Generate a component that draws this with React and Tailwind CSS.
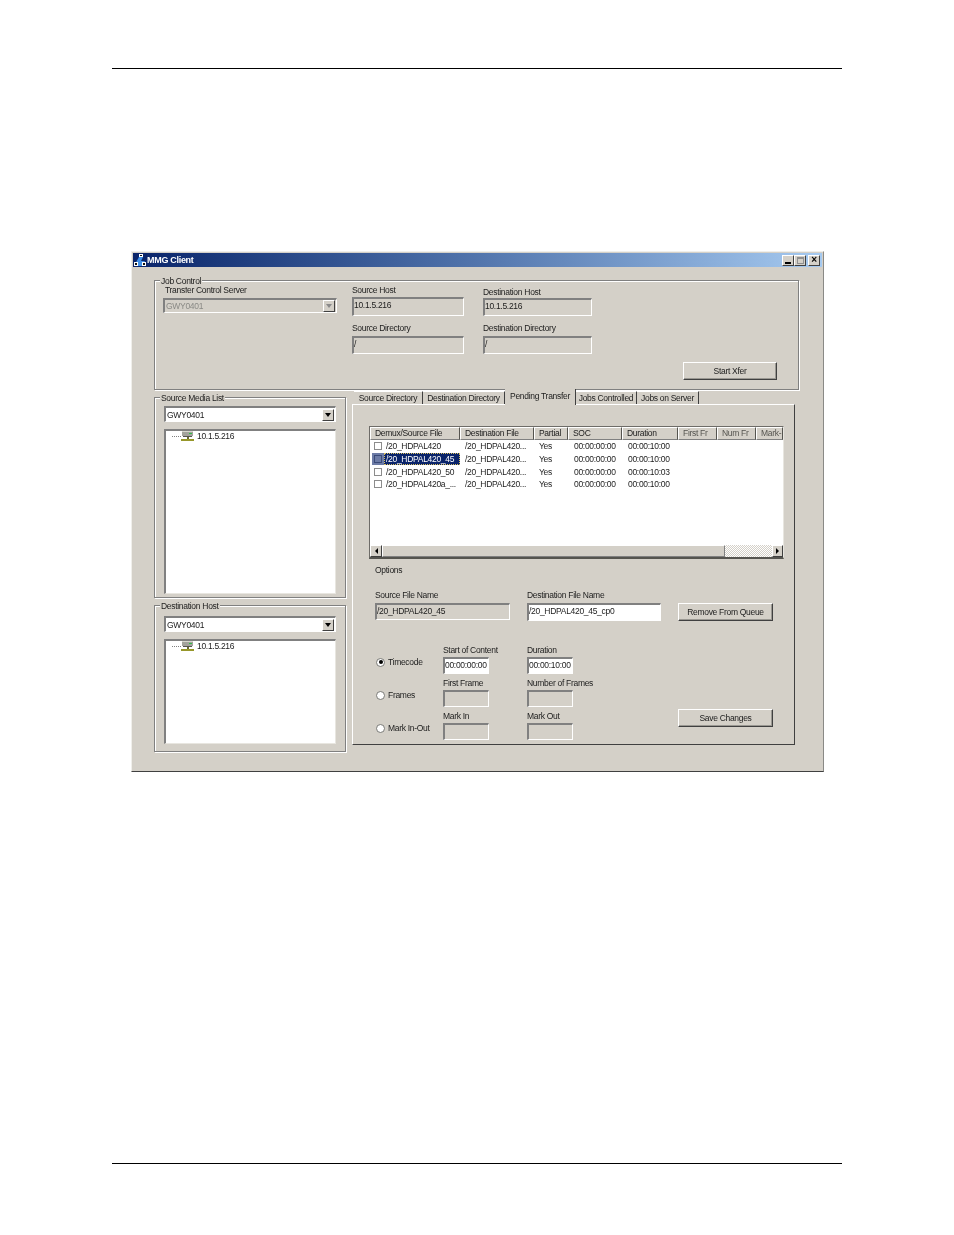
import React from "react";

const rows = [
	{ src: "/20_HDPAL420", dst: "/20_HDPAL420...", partial: "Yes", soc: "00:00:00:00", dur: "00:00:10:00" },
	{ src: "/20_HDPAL420_45", dst: "/20_HDPAL420...", partial: "Yes", soc: "00:00:00:00", dur: "00:00:10:00", selected: true },
	{ src: "/20_HDPAL420_50", dst: "/20_HDPAL420...", partial: "Yes", soc: "00:00:00:00", dur: "00:00:10:03" },
	{ src: "/20_HDPAL420a_...", dst: "/20_HDPAL420...", partial: "Yes", soc: "00:00:00:00", dur: "00:00:10:00" },
];

const columns = [
	{ label: "Demux/Source File", width: "w-[90px]" },
	{ label: "Destination File", width: "w-[74px]" },
	{ label: "Partial", width: "w-[34px]" },
	{ label: "SOC", width: "w-[54px]" },
	{ label: "Duration", width: "w-[56px]" },
	{ label: "First Fr", width: "w-[39px]" },
	{ label: "Num Fr", width: "w-[39px]" },
	{ label: "Mark-I", width: "w-[27px]" },
];

const Label = ({ children, className = "" }) => (
	<div className={`h-[12px] leading-[12px] whitespace-nowrap ${className}`}>{children}</div>
);

// sunken win2k edit box
const Field = ({ value, white, className = "" }) => (
	<div
		className={`border-t-2 border-l-2 border-t-[#808080] border-l-[#808080] border-b border-r border-b-white border-r-white overflow-hidden leading-[13px] whitespace-nowrap ${
			white ? "bg-white" : "bg-[#d4d0c8]"
		} ${className}`}
	>
		{value}
	</div>
);

const Button = ({ children, className = "" }) => (
	<div
		className={`w-[95px] h-[18px] flex items-center justify-center bg-[#d4d0c8] border-t border-l border-t-white border-l-white border-b border-r border-b-[#404040] border-r-[#404040] shadow-[inset_-1px_-1px_0_#9a9892] ${className}`}
	>
		{children}
	</div>
);

const Arrow = ({ dir = "down", muted }) => {
	if (dir === "left") {
		return <div className="w-0 h-0 border-t-[3px] border-b-[3px] border-r-[3px] border-t-transparent border-b-transparent border-r-black" />;
	}
	if (dir === "right") {
		return <div className="w-0 h-0 border-t-[3px] border-b-[3px] border-l-[3px] border-t-transparent border-b-transparent border-l-black" />;
	}
	return (
		<div
			className={`w-0 h-0 border-l-[3px] border-r-[3px] border-t-[4px] border-l-transparent border-r-transparent ${
				muted ? "border-t-[#8a8a8a]" : "border-t-black"
			}`}
		/>
	);
};

const ScrollButton = ({ dir = "down", className = "", muted }) => (
	<div
		className={`flex items-center justify-center bg-[#d4d0c8] border-t border-l border-t-white border-l-white border-b border-r border-b-[#404040] border-r-[#404040] ${className}`}
	>
		<Arrow dir={dir} muted={muted} />
	</div>
);

const Combo = ({ value, disabled, className = "" }) => (
	<div
		className={`flex items-center justify-between border-t-2 border-l-2 border-t-[#808080] border-l-[#808080] border-b border-r border-b-white border-r-white pl-px ${
			disabled ? "bg-[#d4d0c8] text-[#8a8a86]" : "bg-white"
		} ${className}`}
	>
		<span className="leading-[12px]">{value}</span>
		<ScrollButton className="w-[12px] h-[12px] mr-px" muted={disabled} />
	</div>
);

const Group = ({ title, className = "", children }) => (
	<div className={`relative border border-[#808080] shadow-[inset_1px_1px_0_#fff,1px_1px_0_#fff] ${className}`}>
		<div className="absolute -top-[6px] left-[5px] px-px h-[12px] leading-[12px] bg-[#d4d0c8] whitespace-nowrap">
			{title}
		</div>
		{children}
	</div>
);

const ServerIcon = () => (
	<svg width="13" height="10" viewBox="0 0 13 10" className="shrink-0">
		<rect x="1" y="0" width="11" height="5" fill="#a3a39c" />
		<rect x="1" y="0" width="11" height="1" fill="#d8d8d0" />
		<rect x="8" y="2" width="3" height="1" fill="#2fc04a" />
		<rect x="2" y="5" width="9" height="1" fill="#55554f" />
		<rect x="6" y="6" width="2" height="3" fill="#6a6a30" />
		<rect x="0" y="8" width="13" height="2" fill="#97972a" />
	</svg>
);

const Tree = ({ className = "" }) => (
	<div className={`bg-white border-t-2 border-l-2 border-t-[#808080] border-l-[#808080] border-b border-r border-b-[#e8e6e0] border-r-[#e8e6e0] ${className}`}>
		<div className="flex items-center h-[10px] pl-[6px]">
			<div className="w-[9px] border-t border-dotted border-[#808080]" />
			<ServerIcon />
			<span className="ml-[3px] leading-[12px]">10.1.5.216</span>
		</div>
	</div>
);

const Checkbox = ({ selected }) => (
	<div className={`w-[8px] h-[8px] border shrink-0 ${selected ? "bg-[#6c7ba6] border-[#3a4a78]" : "bg-white border-[#8c8c8c]"}`} />
);

const Radio = ({ label, checked }) => (
	<div className="flex items-center h-[12px] mb-[9px]">
		<div className="w-[9px] h-[9px] rounded-full bg-white border border-[#7a7a76] flex items-center justify-center ml-px shrink-0">
			{checked && <div className="w-[4px] h-[4px] rounded-full bg-black" />}
		</div>
		<span className="ml-[3px] leading-[12px] whitespace-nowrap">{label}</span>
	</div>
);

const tabs = [
	{ label: "Source Directory", width: "w-[69px]" },
	{ label: "Destination Directory", width: "w-[82px]" },
	{ label: "Pending Transfer", width: "w-[71px]", active: true },
	{ label: "Jobs Controlled", width: "w-[61px]" },
	{ label: "Jobs on Server", width: "w-[62px]" },
];

const AppIcon = () => (
	<svg width="14" height="14" viewBox="0 0 14 14" className="shrink-0">
		<rect x="0" y="0" width="14" height="14" fill="#0a246a" />
		<rect x="6" y="1" width="4" height="3" fill="#fff" />
		<rect x="7" y="2" width="2" height="1" fill="#111" />
		<path d="M1 13 L6 4 L10 4 L8 8 L12 8 L9 13 Z" fill="#3f8fe8" />
		<rect x="1" y="9" width="4" height="4" fill="#fff" />
		<rect x="2" y="10" width="2" height="2" fill="#111" />
		<rect x="9" y="9" width="4" height="4" fill="#fff" />
		<rect x="10" y="10" width="2" height="2" fill="#111" />
	</svg>
);

const WinButton = ({ children, className = "" }) => (
	<div className={`w-[12px] h-[11px] flex items-center justify-center bg-[#d4d0c8] border-t border-l border-t-white border-l-white border-b border-r border-b-[#404040] border-r-[#404040] ${className}`}>
		{children}
	</div>
);

const App = () => {
	return (
		<div className="w-[954px] h-[1235px] bg-white flex flex-col font-['Liberation_Sans',sans-serif] text-[8.5px] tracking-[-0.3px] text-[#1c1c1c]">
			<div className="mt-[68px] mx-[112px] h-px bg-black shrink-0" />

			{/* MMG Client window */}
			<div className="mt-[182px] ml-[131px] w-[693px] h-[521px] bg-[#d4d0c8] border-t border-l border-t-[#f0efeb] border-l-[#f0efeb] border-b border-r border-b-[#404040] border-r-[#8a8a86] blur-[0.25px] shrink-0">
				<div className="h-[14px] mt-px ml-px mr-px flex items-center bg-gradient-to-r from-[#0a246a] to-[#a6caf0]">
					<AppIcon />
					<span className="font-semibold text-[9px] text-white leading-[14px]">MMG Client</span>
					<div className="ml-auto flex items-center mr-[2px]">
						<WinButton>
							<div className="w-[6px] h-[2px] bg-black mt-[5px]" />
						</WinButton>
						<WinButton>
							<div className="w-[7px] h-[7px] border border-[#909090] border-t-2" />
						</WinButton>
						<WinButton className="ml-[2px] font-bold text-black text-[10px] leading-none">×</WinButton>
					</div>
				</div>

				{/* Job Control */}
				<Group title="Job Control" className="mt-[13px] ml-[22px] w-[645px] h-[110px] flex pl-[8px] pt-[3px]">
					<div className="w-[174px]">
						<Label className="pl-[2px]">Transfer Control Server</Label>
						<Combo value="GWY0401" disabled className="mt-[2px] h-[15px]" />
					</div>
					<div className="w-[112px] ml-[15px]">
						<Label>Source Host</Label>
						<Field value="10.1.5.216" className="mt-px h-[19px]" />
						<Label className="mt-[6px]">Source Directory</Label>
						<Field value="/" className="mt-[2px] h-[18px]" />
					</div>
					<div className="w-[109px] ml-[19px] pt-[2px]">
						<Label>Destination Host</Label>
						<Field value="10.1.5.216" className="h-[18px]" />
						<Label className="mt-[6px]">Destination Directory</Label>
						<Field value="/" className="mt-[2px] h-[18px]" />
					</div>
					<Button className="self-end mb-[9px] ml-[91px] !w-[94px]">Start Xfer</Button>
				</Group>

				<div className="flex mt-[7px] ml-[22px]">
					{/* Left column */}
					<div className="w-[192px]">
						<Group title="Source Media List" className="h-[201px] px-[9px] pt-[8px]">
							<Combo value="GWY0401" className="h-[16px]" />
							<Tree className="mt-[7px] h-[165px]" />
						</Group>
						<Group title="Destination Host" className="mt-[7px] h-[147px] px-[9px] pt-[10px]">
							<Combo value="GWY0401" className="h-[16px]" />
							<Tree className="mt-[7px] h-[105px]" />
						</Group>
					</div>

					{/* Tabs */}
					<div className="ml-[6px] -mt-[7px] w-[443px]">
						<div className="flex items-end h-[14px] pl-[2px]">
							{tabs.map((t) => (
								<div
									key={t.label}
									className={`${t.width} shrink-0 overflow-hidden whitespace-nowrap leading-[12px] text-center border-r border-r-[#404040] ${
										t.active ? "h-[16px] relative z-10 -mb-px bg-[#d4d0c8] pt-px" : "h-[13px] border-t border-t-white"
									}`}
								>
									{t.label}
								</div>
							))}
						</div>
						<div className="h-[341px] border-t border-l border-t-white border-l-white border-b border-r border-b-[#404040] border-r-[#404040] pl-[16px] pt-[21px]">
							{/* Pending transfer list */}
							<div className="w-[415px] h-[133px] bg-white border-t border-l border-t-[#6e6c68] border-l-[#6e6c68] border-b-2 border-r border-b-[#55544f] border-r-[#e8e6e0] flex flex-col overflow-hidden">
								<div className="flex h-[13px] shrink-0 bg-[#d4d0c8]">
									{columns.map((c, i) => (
										<div
											key={c.label}
											className={`${c.width} shrink-0 overflow-hidden whitespace-nowrap pl-[4px] leading-[11px] border-r border-b border-r-[#55544f] border-b-[#808080] border-t border-l border-t-white border-l-white ${i > 4 ? "text-[#55544f]" : ""}`}
										>
											{c.label}
										</div>
									))}
								</div>
								<div className="flex-1">
									{rows.map((r) => (
										<div key={r.src} className="flex items-center h-[12.67px] leading-[12px] whitespace-nowrap">
											<div className={`w-[12px] ml-[2px] h-full flex items-center pl-[2px] shrink-0 ${r.selected ? "bg-[#6c7ba6]" : ""}`}>
												<Checkbox selected={r.selected} />
											</div>
											<div className="w-[76px] shrink-0 overflow-hidden">
												<span className={r.selected ? "block pl-[2px] bg-[#0a246a] text-white outline-1 outline-dotted outline-[#d8c060] -outline-offset-1" : "block pl-[2px]"}>{r.src}</span>
											</div>
											<div className="w-[74px] shrink-0 pl-[5px] overflow-hidden">{r.dst}</div>
											<div className="w-[34px] shrink-0 pl-[5px]">{r.partial}</div>
											<div className="w-[54px] shrink-0 pl-[6px]">{r.soc}</div>
											<div className="w-[56px] shrink-0 pl-[6px]">{r.dur}</div>
										</div>
									))}
								</div>
								<div className="flex h-[12px] shrink-0 bg-[#d4d0c8]">
									<ScrollButton dir="left" className="w-[12px] h-full" />
									<div className="w-[343px] h-full border-r border-b border-r-[#808080] border-b-[#808080] border-t border-l border-t-white border-l-white" />
									<div className="flex-1 h-full bg-[repeating-conic-gradient(#d4d0c8_0_25%,#ffffff_0_50%)] bg-[length:2px_2px]" />
									<ScrollButton dir="right" className="w-[11px] h-full" />
								</div>
							</div>

							<Label className="mt-[5px] ml-[6px]">Options</Label>

							{/* File names */}
							<div className="flex mt-[13px] ml-[6px]">
								<div className="w-[152px]">
									<Label>Source File Name</Label>
									<Field value="/20_HDPAL420_45" className="mt-[2px] w-[135px] h-[17px]" />
								</div>
								<div className="w-[151px]">
									<Label>Destination File Name</Label>
									<Field value="/20_HDPAL420_45_cp0" white className="mt-[2px] w-[134px] h-[18px]" />
								</div>
								<Button className="mt-[14px]">Remove From Queue</Button>
							</div>

							{/* Time options */}
							<div className="grid grid-cols-[68px_84px_151px_95px] grid-rows-[33px_33px_33px] mt-[23px] ml-[6px]">
								<div className="flex items-end"><Radio label="Timecode" checked /></div>
								<div>
									<Label>Start of Content</Label>
									<Field value="00:00:00:00" white className="mt-px w-[46px] h-[17px]" />
								</div>
								<div>
									<Label>Duration</Label>
									<Field value="00:00:10:00" white className="mt-px w-[46px] h-[17px]" />
								</div>
								<div />

								<div className="flex items-end"><Radio label="Frames" /></div>
								<div>
									<Label>First Frame</Label>
									<Field className="mt-px w-[46px] h-[17px]" />
								</div>
								<div>
									<Label>Number of Frames</Label>
									<Field className="mt-px w-[46px] h-[17px]" />
								</div>
								<div />

								<div className="flex items-end"><Radio label="Mark In-Out" /></div>
								<div>
									<Label>Mark In</Label>
									<Field className="mt-px w-[46px] h-[17px]" />
								</div>
								<div>
									<Label>Mark Out</Label>
									<Field className="mt-px w-[46px] h-[17px]" />
								</div>
								<Button className="-mt-px">Save Changes</Button>
							</div>
						</div>
					</div>
				</div>
			</div>

			<div className="mt-[391px] mx-[112px] h-px bg-black shrink-0" />
		</div>
	);
};

export default App;
